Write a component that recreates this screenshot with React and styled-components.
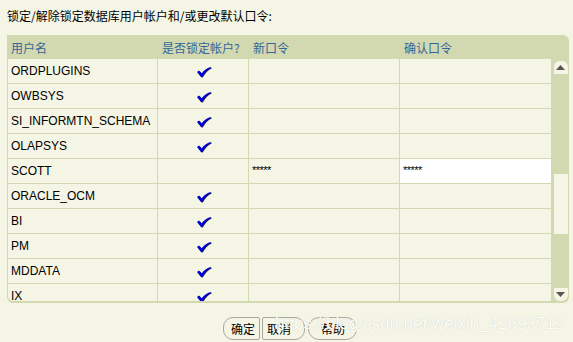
import React from "react";
import styled, { createGlobalStyle } from "styled-components";

const Global = createGlobalStyle`
  html, body { margin: 0; padding: 0; background: #f5f5e6; }
  body { font-family: "Liberation Sans", Arial, "Noto Sans CJK SC", sans-serif; font-size: 12px; color: #000; overflow: hidden; }
`;

const Page = styled.div`
  position: relative;
  width: 573px;
  height: 342px;
  padding: 8px 0 0 7px;
  box-sizing: border-box;
`;

const Title = styled.div`
  font-family: "Noto Sans CJK SC", sans-serif;
  font-size: 12px;
  line-height: 16px;
  height: 27px;
`;

const Panel = styled.div`
  width: 562px;
  background: #d2d8b0;
  border-radius: 0 6px 6px 6px;
  overflow: hidden;
`;

const cols = "151px 91px 151px 151px";

const HeaderRow = styled.div`
  display: grid;
  grid-template-columns: ${cols};
  height: 24px;
  align-items: center;
`;

const HeadCell = styled.div`
  font-family: "Noto Sans CJK SC", sans-serif;
  color: #336699;
  font-size: 12px;
  padding-left: 4px;
`;

const Body = styled.div`
  display: flex;
  height: 242px;
  margin: 0 1px 2px 1px;
  border-radius: 0 0 5px 5px;
  overflow: hidden;
`;

const Rows = styled.div`
  width: 543px;
  height: 242px;
  overflow: hidden;
  background: #f5f5e6;
  border-right: 2px solid #d2d8b0;
`;

const Row = styled.div`
  display: grid;
  grid-template-columns: 150px 91px 151px 151px;
  height: 25px;
  box-sizing: border-box;
  border-bottom: 1px solid #d2d8b0;
`;

const Cell = styled.div`
  display: flex;
  align-items: ${(p) => (p.$top ? "flex-start" : "center")};
  justify-content: ${(p) => (p.$center ? "center" : "flex-start")};
  padding-left: ${(p) => (p.$center ? "0" : "3px")};
  padding-top: ${(p) => (p.$top ? "6px" : "0")};
  border-right: ${(p) => (p.$last ? "none" : "1px solid #d2d8b0")};
  background: ${(p) => (p.$white ? "#ffffff" : "transparent")};
  font-size: 12px;
  box-sizing: border-box;
  white-space: nowrap;
  overflow: hidden;
`;

const Stars = styled.span`
  font-size: 11px;
  line-height: 10px;
  letter-spacing: -0.5px;
`;

const Scrollbar = styled.div`
  width: 15px;
  display: flex;
  flex-direction: column;
  align-items: center;
  background: #d2d8b0;
  padding-top: 2px;
  box-sizing: border-box;
`;

const ArrowBtn = styled.div`
  width: 14px;
  height: 13px;
  background: #f5f5e6;
  border-radius: ${(p) => (p.$down ? "0 0 6px 6px" : "6px 6px 0 0")};
  display: flex;
  align-items: center;
  justify-content: center;
`;

const Track = styled.div`
  flex: 1;
  width: 14px;
  display: flex;
  flex-direction: column;
`;

const Thumb = styled.div`
  margin-top: 100px;
  height: 60px;
  background: #f5f5e6;
`;

const Buttons = styled.div`
  display: flex;
  justify-content: center;
  margin-top: 14px;
`;

const Btn = styled.div`
  font-family: "Noto Sans CJK SC", sans-serif;
  font-size: 12px;
  height: 21px;
  line-height: 21px;
  padding: ${(p) => p.$pad};
  margin-left: ${(p) => p.$gap || "0"};
  border: 1px solid #a8a8a0;
  border-radius: ${(p) => p.$radius};
  color: #000;
  background: #f5f5e6;
`;

const Watermark = styled.div`
  position: absolute;
  left: 275px;
  top: 314px;
  font-family: "Liberation Sans", Arial, sans-serif;
  font-size: 17px;
  color: #fdfdf8;
  text-shadow: 0 0 1px rgba(140, 140, 130, 0.45);
  pointer-events: none;
  white-space: nowrap;
`;

const Check = () => (
  <svg width="17" height="13" viewBox="0 0 17 13">
    <path d="M2 7 L4 5.5 L6.5 8.5 Q10 3.5 15.5 2 L16 3 Q11 5 7 12 L6 12 Z" fill="#1a1a40" transform="translate(0.7,0.6)" />
    <path d="M2 7 L4 5.5 L6.5 8.5 Q10 3.5 15.5 2 L16 3 Q11 5 7 12 L6 12 Z" fill="#0000dd" />
  </svg>
);

const Tri = ({ down }) => (
  <svg width="9" height="6" viewBox="0 0 9 6">
    <path d={down ? "M0 0 H9 L4.5 5 Z" : "M4.5 0 L9 5 H0 Z"} fill="#555" />
  </svg>
);

const data = [
  ["ORDPLUGINS", true],
  ["OWBSYS", true],
  ["SI_INFORMTN_SCHEMA", true],
  ["OLAPSYS", true],
  ["SCOTT", false, true],
  ["ORACLE_OCM", true],
  ["BI", true],
  ["PM", true],
  ["MDDATA", true],
  ["IX", true],
];

export default function App() {
  return (
    <>
      <Global />
      <Page>
        <Title>锁定/解除锁定数据库用户帐户和/或更改默认口令:</Title>
        <Panel>
          <HeaderRow>
            <HeadCell>用户名</HeadCell>
            <HeadCell>是否锁定帐户?</HeadCell>
            <HeadCell>新口令</HeadCell>
            <HeadCell>确认口令</HeadCell>
          </HeaderRow>
          <Body>
            <Rows>
              {data.map(([name, locked, pw]) => (
                <Row key={name}>
                  <Cell>{name}</Cell>
                  <Cell $center>{locked ? <Check /> : null}</Cell>
                  <Cell $top={pw}>{pw ? <Stars>*****</Stars> : null}</Cell>
                  <Cell $top={pw} $white={pw} $last>{pw ? <Stars>*****</Stars> : null}</Cell>
                </Row>
              ))}
            </Rows>
            <Scrollbar>
              <ArrowBtn><Tri /></ArrowBtn>
              <Track><Thumb /></Track>
              <ArrowBtn $down><Tri down /></ArrowBtn>
            </Scrollbar>
          </Body>
        </Panel>
        <Buttons>
          <Btn $pad="0 4px 0 7px" $radius="10px 2px 2px 10px">确定</Btn>
          <Btn $pad="0 13px 0 4px" $radius="2px 10px 10px 2px" $gap="2px">取消</Btn>
          <Btn $pad="0 11px 0 12px" $radius="11px" $gap="3px">帮助</Btn>
        </Buttons>
        <Watermark>https://blog.csdn.net/weixin_42693712</Watermark>
      </Page>
    </>
  );
}
